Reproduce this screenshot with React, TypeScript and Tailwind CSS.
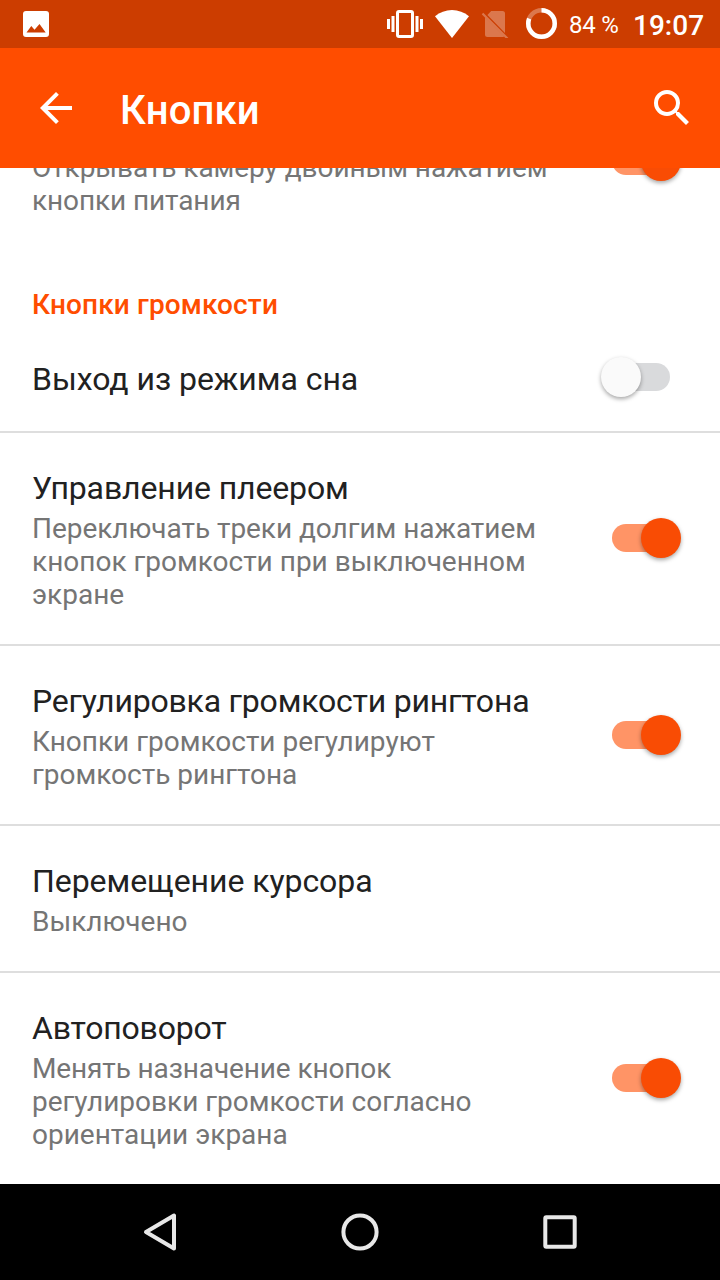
import { memo } from 'react'
import clsx from 'clsx'

type Preference = {
  title: string
  titleClass?: string
  summary?: { text: string; className?: string }[]
  checked?: boolean
}

const preferences: Preference[] = [
  { title: 'Выход из режима сна', titleClass: 'tracking-[-0.04px]', checked: false },
  {
    title: 'Управление плеером',
    titleClass: 'tracking-[-0.12px]',
    summary: [
      { text: 'Переключать треки долгим нажатием', className: 'tracking-[-0.04px]' },
      { text: 'кнопок громкости при выключенном' },
      { text: 'экране' },
    ],
    checked: true,
  },
  {
    title: 'Регулировка громкости рингтона',
    titleClass: 'tracking-[-0.2px]',
    summary: [{ text: 'Кнопки громкости регулируют' }, { text: 'громкость рингтона' }],
    checked: true,
  },
  { title: 'Перемещение курсора', titleClass: 'tracking-[-0.06px]', summary: [{ text: 'Выключено' }] },
  {
    title: 'Автоповорот',
    titleClass: 'tracking-[-0.18px]',
    summary: [
      { text: 'Менять назначение кнопок', className: 'tracking-[-0.12px]' },
      { text: 'регулировки громкости согласно' },
      { text: 'ориентации экрана' },
    ],
    checked: true,
  },
]

function StatusBar() {
  return (
    <div className="h-12 shrink-0 bg-[#cc3d00] flex items-center text-white">
      <svg className="ml-[23px] w-[26px] h-[26px]" viewBox="0 0 26 26">
        <rect width="26" height="26" rx="3" fill="#fff" />
        <path d="M3.5 21.5 8.3 15l3.2 3.8 5-5.8 6.2 8.5z" fill="#cc3d00" />
      </svg>
      <div className="ml-auto flex items-center">
        <svg className="w-9 h-7" viewBox="0 0 36 28" fill="#fff">
          <path d="M0 9h3v10H0zM4.5 6h3v16h-3zM28.500 6h3v16h-3zM33 9h3v10h-3z" />
          <rect x="10.500" y="1.500" width="15" height="25" rx="1.500" fill="none" stroke="#fff" strokeWidth="3" />
        </svg>
        <svg className="ml-3 w-[34px] h-7" viewBox="0 0 34 28" fill="#fff">
          <path d="M17 28 0 6.200C5 2.300 10.500 0 17 0s12 2.300 17 6.200z" />
        </svg>
        <svg className="ml-3 w-7 h-7" viewBox="0 0 28 28">
          <path d="M10.200 1H21.500A2.500 2.500 0 0 1 24 3.500v19.500L6.400 5zM4 7.500 23 26.500Q22.500 27 21.500 27H6.500A2.500 2.500 0 0 1 4 24.500z" fill="#fff" fillOpacity=".3" />
          <path d="m1.500 3.500 25 25" stroke="#fff" strokeOpacity=".3" strokeWidth="2.200" />
        </svg>
        <svg className="ml-4 w-8 h-8" viewBox="0 0 32 32" fill="none" strokeWidth="4.500">
          <circle cx="16.500" cy="15.500" r="13.250" stroke="#fff" strokeOpacity=".3" />
          <circle cx="16.500" cy="15.500" r="13.250" stroke="#fff" pathLength="100" strokeDasharray="81 19" transform="rotate(-90 16.500 15.500)" />
        </svg>
        <span className="ml-3 w-[52px] pt-0.5 text-2xl leading-7 tracking-[-0.2px] whitespace-nowrap">84 %</span>
        <span className="ml-3 mr-4 w-[71px] pt-1 text-[28px] leading-8 font-medium">19:07</span>
      </div>
    </div>
  )
}

function AppBar() {
  return (
    <header className="h-[120px] shrink-0 bg-[#ff4d00] flex items-center px-6 pl-8 text-white">
      <button>
        <svg className="w-12 h-12" viewBox="0 0 24 24" fill="currentColor">
          <path d="M20 11H7.830l5.590-5.590L12 4l-8 8 8 8 1.410-1.410L7.830 13H20v-2z" />
        </svg>
      </button>
      <h1 className="ml-10 mt-1.5 text-[40px] leading-[48px] font-medium tracking-[0.15px]">Кнопки</h1>
      <button className="ml-auto">
        <svg className="w-12 h-12" viewBox="0 0 24 24" fill="currentColor">
          <path d="M15.500 14h-.790l-.280-.270A6.471 6.471 0 0 0 16 9.500 6.500 6.500 0 1 0 9.500 16c1.610 0 3.090-.590 4.230-1.570l.270.280v.790l5 4.990L20.490 19l-4.990-5zm-6 0C7.010 14 5 11.990 5 9.500S7.010 5 9.500 5 14 7.010 14 9.500 11.990 14 9.500 14z" />
        </svg>
      </button>
    </header>
  )
}

function Switch({ checked }: { checked: boolean }) {
  return (
    <div className={clsx('relative w-[58px] h-7 rounded-full mr-[50px] mb-px shrink-0', checked ? 'bg-[#ff9466]' : 'bg-[#d9dadc]')}>
      <div
        className={clsx(
          'absolute -top-1.5 w-10 h-10 rounded-full shadow-[0_2px_4px_rgba(0,0,0,0.35)]',
          checked ? 'left-[29px] bg-[#f94c04]' : '-left-[11px] bg-[#fafafa]',
        )}
      />
    </div>
  )
}

function Summary({ lines }: { lines: NonNullable<Preference['summary']> }) {
  return (
    <div className="text-[28px] leading-[33px] text-[#757575]">
      {lines.map((line) => (
        <p key={line.text} className={clsx('whitespace-nowrap', line.className)}>{line.text}</p>
      ))}
    </div>
  )
}

function PreferenceRow({ title, titleClass, summary, checked }: Preference) {
  return (
    <div className={clsx('flex items-center justify-between pl-8', !summary && 'h-[110px]')}>
      <div className={summary ? 'pt-9 pb-[33px]' : 'pt-1'}>
        <h2 className={clsx('text-[32px] leading-[38px] text-[#212121] whitespace-nowrap', titleClass)}>{title}</h2>
        {summary && (
          <div className="pt-[5px]">
            <Summary lines={summary} />
          </div>
        )}
      </div>
      {checked !== undefined && <Switch checked={checked} />}
    </div>
  )
}

function NavBar() {
  return (
    <nav className="h-24 shrink-0 bg-black flex items-center justify-center gap-[152px]">
      <svg className="w-12 h-12" viewBox="0 0 48 48" fill="none" stroke="#e8e8e8" strokeWidth="4" strokeLinejoin="round">
        <path d="M38 7.500v33L10 24z" />
      </svg>
      <svg className="w-12 h-12" viewBox="0 0 48 48" fill="none" stroke="#e8e8e8" strokeWidth="4">
        <circle cx="24" cy="24" r="16.600" />
      </svg>
      <svg className="w-12 h-12" viewBox="0 0 48 48" fill="none" stroke="#e8e8e8" strokeWidth="4" strokeLinejoin="round">
        <rect x="9.300" y="9.300" width="29.400" height="29.400" rx="1" />
      </svg>
    </nav>
  )
}

function App() {
  return (
    <div className="w-[720px] h-[1280px] flex flex-col overflow-hidden bg-white font-['Roboto',sans-serif]">
      <StatusBar />
      <AppBar />
      <main className="flex-1 min-h-0 overflow-hidden">
        {/* camera row, scrolled partly under the app bar */}
        <div className="-mt-24 h-[178px] flex items-center justify-between pl-8">
          <div className="pt-[46px]">
            <Summary
              lines={[
                { text: 'Открывать камеру двойным нажатием', className: 'tracking-[-0.06px]' },
                { text: 'кнопки питания', className: 'tracking-[-0.1px]' },
              ]}
            />
          </div>
          <Switch checked />
        </div>
        <h3 className="h-[73px] pt-[38px] pl-8 text-[28px] leading-[33px] font-medium tracking-[0.13px] text-[#ff4d00]">Кнопки громкости</h3>
        <div className="divide-y-2 divide-[#dedede]">
          {preferences.map((pref) => (
            <PreferenceRow key={pref.title} {...pref} />
          ))}
        </div>
      </main>
      <NavBar />
    </div>
  )
}

export default memo(App)
